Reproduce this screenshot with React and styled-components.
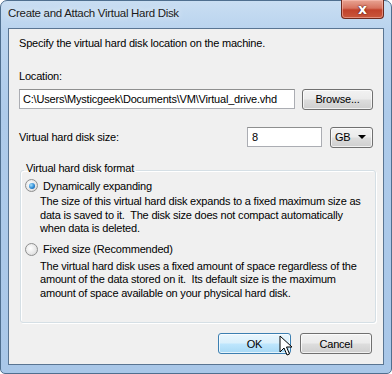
import React from "react"
import styled, { createGlobalStyle } from "styled-components"

const GlobalStyle = createGlobalStyle`
  html, body {
    margin: 0;
    padding: 0;
    background: #ffffff;
  }
  body {
    font-family: "Liberation Sans", Arial, sans-serif;
    font-size: 11px;
    letter-spacing: -0.2px;
    color: #000;
  }
`

const Window = styled.div`
  width: 392px;
  height: 374px;
  box-sizing: border-box;
  display: flex;
  flex-direction: column;
  padding: 0 7px 8px 7px;
  background: linear-gradient(180deg, #c9def2 0%, #b9d3ee 8%, #aecbea 30%, #a9c7e8 100%);
  border: 1px solid #4f6f8f;
  border-radius: 7px 7px 5px 5px;
`

const TitleBar = styled.div`
  height: 27px;
  display: flex;
  align-items: flex-start;
  justify-content: space-between;
`

const Title = styled.div`
  margin-top: 6px;
  font-size: 11.5px;
  letter-spacing: -0.3px;
  color: #1b1b1b;
  text-shadow: 0 0 6px rgba(255, 255, 255, 0.9);
`

const CloseButton = styled.div`
  width: 43px;
  height: 19px;
  margin-top: -1px;
  box-sizing: border-box;
  display: flex;
  align-items: center;
  justify-content: center;
  border: 1px solid #6e2a1e;
  border-top: none;
  border-radius: 0 0 4px 4px;
  background: linear-gradient(180deg, #e8a493 0%, #d7735f 45%, #c1422b 55%, #c9573c 100%);
  box-shadow: inset 0 0 0 1px rgba(255, 200, 190, 0.5);
  color: #fff;
  font-weight: bold;
  font-size: 14px;
  font-family: "DejaVu Sans", sans-serif;
  text-shadow: 0 0 2px #5a1a10, 0 0 1px #5a1a10;
  line-height: 1;
`

const Client = styled.div`
  flex: 1;
  position: relative;
  box-sizing: border-box;
  border: 1px solid #5a7592;
  background: #f0f0f0;
  padding: 0 10px 0 10px;
  display: flex;
  flex-direction: column;
`

const Label = styled.div`
  line-height: 15px;
  margin-top: ${(p) => p.$top || 0}px;
  white-space: nowrap;
`

const Row = styled.div`
  display: flex;
  align-items: center;
  margin-top: ${(p) => p.$top || 0}px;
  height: 20px;
`

const TextBox = styled.div`
  box-sizing: border-box;
  width: ${(p) => p.$w}px;
  height: ${(p) => p.$h || 20}px;
  border: 1px solid #abadb3;
  border-top-color: #8e8f8f;
  background: #fff;
  padding-left: ${(p) => p.$pad || 3}px;
  display: flex;
  align-items: center;
  white-space: nowrap;
  overflow: hidden;
`

const Button = styled.div`
  box-sizing: border-box;
  width: ${(p) => p.$w}px;
  height: 21px;
  margin-left: ${(p) => p.$ml || 0}px;
  border: 1px solid ${(p) => (p.$hot ? "#3c7fb1" : "#707070")};
  border-radius: 3px;
  background: ${(p) =>
    p.$hot
      ? "linear-gradient(180deg, #eaf6fd 0%, #d9f0fc 48%, #bee6fd 52%, #a7d9f5 100%)"
      : "linear-gradient(180deg, #f2f2f2 0%, #ebebeb 48%, #dddddd 52%, #cfcfcf 100%)"};
  box-shadow: inset 0 0 0 1px rgba(255, 255, 255, 0.7);
  display: flex;
  align-items: center;
  justify-content: center;
`

const Combo = styled.div`
  box-sizing: border-box;
  width: 43px;
  height: 21px;
  margin-left: 8px;
  border: 1px solid #707070;
  border-radius: 3px;
  background: linear-gradient(180deg, #f2f2f2 0%, #ebebeb 48%, #dddddd 52%, #cfcfcf 100%);
  box-shadow: inset 0 0 0 1px rgba(255, 255, 255, 0.7);
  display: flex;
  align-items: center;
  justify-content: space-between;
  padding: 0 6px 0 4px;
`

const Arrow = styled.span`
  width: 0;
  height: 0;
  border-left: 4px solid transparent;
  border-right: 4px solid transparent;
  border-top: 4px solid #000;
`

const Spacer = styled.div`
  flex: 1;
`

const Group = styled.fieldset`
  margin: 15px 0 0 1px;
  width: 356px;
  min-width: 0;
  height: 161px;
  box-sizing: border-box;
  border: 1px solid #d5dfe5;
  border-radius: 3px;
  box-shadow: 1px 1px 0 #fff, inset 1px 1px 0 #fff;
  padding: 0 0 0 4px;
`

const Legend = styled.legend`
  padding: 0 2px 4px 2px;
  margin-left: -1px;
  line-height: 12px;
`

const RadioRow = styled.div`
  display: flex;
  align-items: center;
  gap: 5px;
  height: 15px;
  margin-top: ${(p) => p.$top || 0}px;
`

const Radio = styled.span`
  width: 13px;
  height: 13px;
  box-sizing: border-box;
  border-radius: 50%;
  border: 1px solid #8e8f8f;
  background: radial-gradient(circle at 40% 40%, #ffffff 0%, #e6e6e6 60%, #c8c8c8 100%);
  display: flex;
  align-items: center;
  justify-content: center;

  &::after {
    content: "";
    display: ${(p) => (p.$checked ? "block" : "none")};
    width: 6px;
    height: 6px;
    border-radius: 50%;
    background: radial-gradient(circle at 35% 35%, #a6e0fb 0%, #2c8ad6 55%, #0d4d8e 100%);
  }
`

const Desc = styled.div`
  margin: ${(p) => p.$top || 0}px 0 0 15px;
  line-height: 13.5px;
  white-space: pre;
`

const ButtonBar = styled.div`
  display: flex;
  justify-content: flex-end;
  margin: 10px 1px 0 0;
`

const Pointer = styled.svg`
  position: absolute;
  left: 270px;
  top: 306px;
`

export default function App() {
  return (
    <>
      <GlobalStyle />
      <Window>
        <TitleBar>
          <Title>Create and Attach Virtual Hard Disk</Title>
          <CloseButton>x</CloseButton>
        </TitleBar>
        <Client>
          <Label $top={7}>Specify the virtual hard disk location on the machine.</Label>
          <Label $top={18}>Location:</Label>
          <Row $top={5}>
            <TextBox $w={276}>C:\Users\Mysticgeek\Documents\VM\Virtual_drive.vhd</TextBox>
            <Spacer />
            <Button $w={71}>Browse...</Button>
          </Row>
          <Row $top={18}>
            <Label>Virtual hard disk size:</Label>
            <Spacer />
            <TextBox $w={75} $pad={4}>8</TextBox>
            <Combo>
              <span>GB</span>
              <Arrow />
            </Combo>
          </Row>
          <Group>
            <Legend>Virtual hard disk format</Legend>
            <RadioRow>
              <Radio $checked />
              <span>Dynamically expanding</span>
            </RadioRow>
            <Desc $top={2}>
              {"The size of this virtual hard disk expands to a fixed maximum size as\ndata is saved to it.  The disk size does not compact automatically\nwhen data is deleted."}
            </Desc>
            <RadioRow $top={6}>
              <Radio />
              <span>Fixed size (Recommended)</span>
            </RadioRow>
            <Desc $top={3}>
              {"The virtual hard disk uses a fixed amount of space regardless of the\namount of the data stored on it.  Its default size is the maximum\namount of space available on your physical hard disk."}
            </Desc>
          </Group>
          <ButtonBar>
            <Button $w={73} $hot>OK</Button>
            <Button $w={72} $ml={9}>Cancel</Button>
          </ButtonBar>
          <Pointer width="14" height="22" viewBox="0 0 14 22">
            <path
              d="M1 1 L1 17 L5 13 L8 20 L10.5 19 L7.5 12 L13 12 Z"
              fill="#fff"
              stroke="#000"
              strokeWidth="1"
              strokeLinejoin="miter"
            />
          </Pointer>
        </Client>
      </Window>
    </>
  )
}
